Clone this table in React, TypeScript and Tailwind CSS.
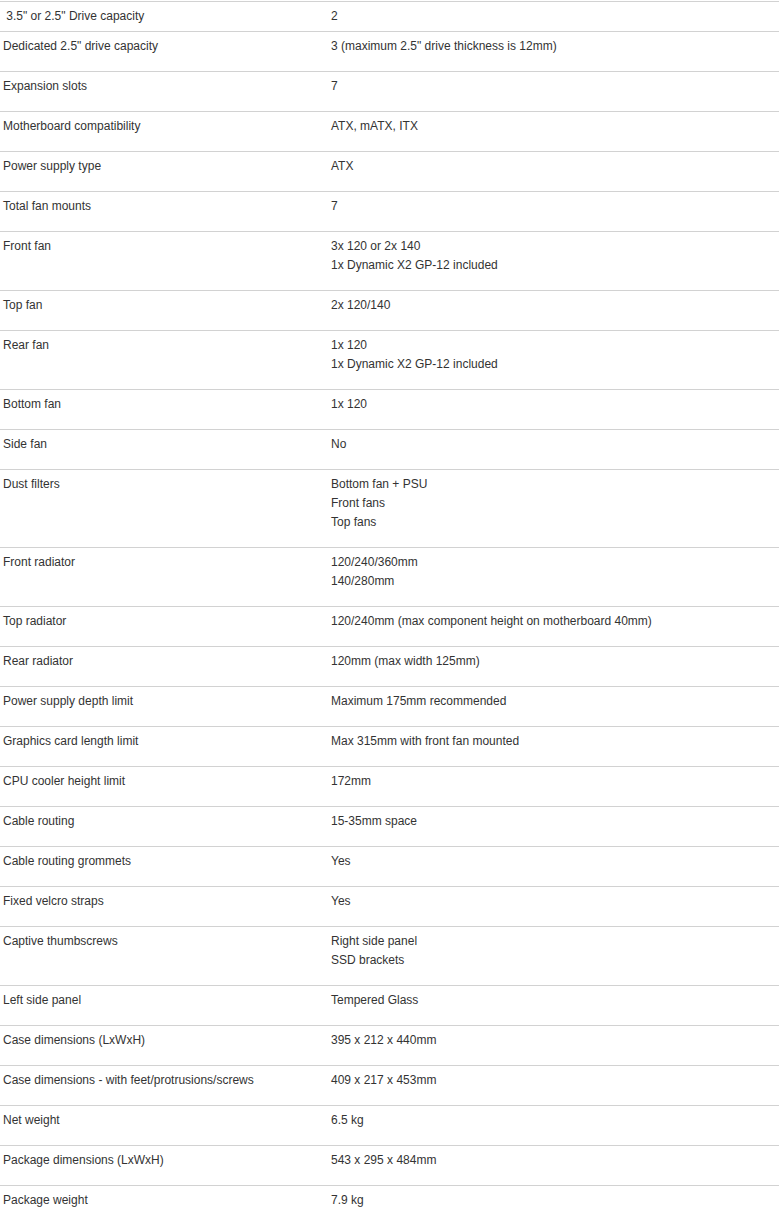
import React from 'react';

type Spec = { label: string; values: string[] };

const SPECS: Spec[] = [
  { label: '\u00a03.5" or 2.5" Drive capacity', values: ['2'] },
  { label: 'Dedicated 2.5" drive capacity', values: ['3 (maximum 2.5" drive thickness is 12mm)'] },
  { label: 'Expansion slots', values: ['7'] },
  { label: 'Motherboard compatibility', values: ['ATX, mATX, ITX'] },
  { label: 'Power supply type', values: ['ATX'] },
  { label: 'Total fan mounts', values: ['7'] },
  { label: 'Front fan', values: ['3x 120 or 2x 140', '1x Dynamic X2 GP-12 included'] },
  { label: 'Top fan', values: ['2x 120/140'] },
  { label: 'Rear fan', values: ['1x 120', '1x Dynamic X2 GP-12 included'] },
  { label: 'Bottom fan', values: ['1x 120'] },
  { label: 'Side fan', values: ['No'] },
  { label: 'Dust filters', values: ['Bottom fan + PSU', 'Front fans', 'Top fans'] },
  { label: 'Front radiator', values: ['120/240/360mm', '140/280mm'] },
  { label: 'Top radiator', values: ['120/240mm (max component height on motherboard 40mm)'] },
  { label: 'Rear radiator', values: ['120mm (max width 125mm)'] },
  { label: 'Power supply depth limit', values: ['Maximum 175mm recommended'] },
  { label: 'Graphics card length limit', values: ['Max 315mm with front fan mounted'] },
  { label: 'CPU cooler height limit', values: ['172mm'] },
  { label: 'Cable routing', values: ['15-35mm space'] },
  { label: 'Cable routing grommets', values: ['Yes'] },
  { label: 'Fixed velcro straps', values: ['Yes'] },
  { label: 'Captive thumbscrews', values: ['Right side panel', 'SSD brackets'] },
  { label: 'Left side panel', values: ['Tempered Glass'] },
  { label: 'Case dimensions (LxWxH)', values: ['395 x 212 x 440mm'] },
  { label: 'Case dimensions - with feet/protrusions/screws', values: ['409 x 217 x 453mm'] },
  { label: 'Net weight', values: ['6.5 kg'] },
  { label: 'Package dimensions (LxWxH)', values: ['543 x 295 x 484mm'] },
  { label: 'Package weight', values: ['7.9 kg'] },
];

const SpecRow: React.FC<{ spec: Spec; first: boolean }> = ({ spec, first }) => (
  <div
    className={`grid grid-cols-[328px_1fr] border-t border-[#d2d2d2] pt-[5px] ${first ? 'pb-[5px]' : 'pb-[15px]'}`}
  >
    <div className="pl-[3px]">{spec.label}</div>
    <div className="pl-[3px]">
      {spec.values.map((v, i) => (
        <div key={i}>{v}</div>
      ))}
    </div>
  </div>
);

const App: React.FC = () => {
  return (
    <div className="min-h-screen bg-white pt-px">
      <div
        className="w-[779px] text-[12px] leading-[19px] text-[#333333]"
        style={{ fontFamily: '"Liberation Sans", Arial, sans-serif' }}
      >
        {SPECS.map((spec, i) => (
          <SpecRow key={spec.label} spec={spec} first={i === 0} />
        ))}
      </div>
    </div>
  );
};

export default App;
